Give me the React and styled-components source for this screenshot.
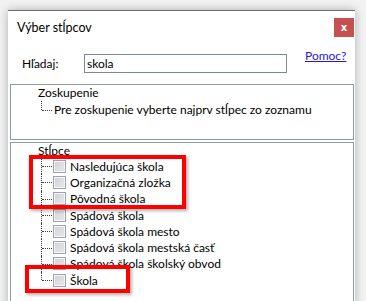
import React from "react";
import styled, {createGlobalStyle} from "styled-components";

const GlobalStyle = createGlobalStyle`
  html, body {
    margin: 0;
    padding: 0;
    height: 301px;
    overflow: hidden;
    background: #f2f2f2;
  }
  body {
    font-family: Lato, "Noto Sans", "Liberation Sans", sans-serif;
    font-size: 12px;
    color: #000;
  }
`;

const Window = styled.div`
  display: flex;
  flex-direction: column;
  box-sizing: border-box;
  width: 347px;
  height: 300px;
  margin: 10px 0 0 8px;
  background: #fff;
  border-top: 1px solid #6d6d6d;
  box-shadow: 0 0 9px rgba(0, 0, 0, 0.28);
`;

const TitleBar = styled.div`
  display: flex;
  align-items: flex-start;
  justify-content: space-between;
  height: 32px;
  padding: 7px 1px 0 9px;
  box-sizing: border-box;
`;

const Title = styled.div`
  line-height: 19px;
  font-size: 12.5px;
`;

const CloseButton = styled.div`
  display: flex;
  align-items: center;
  justify-content: center;
  width: 20px;
  height: 19px;
  background: #c75050;
  color: #fff;
  font-family: "DejaVu Sans", sans-serif;
  font-weight: bold;
  font-size: 10px;
  line-height: 1;
`;

const SearchRow = styled.div`
  display: flex;
  align-items: center;
  padding: 11px 0 0 14px;
`;

const Label = styled.label`
  width: 62px;
  line-height: 19px;
`;

const SearchInput = styled.input`
  box-sizing: border-box;
  width: 203px;
  height: 19px;
  margin: 0;
  padding: 0 2px;
  border: 1px solid #7b8896;
  font-family: inherit;
  font-size: 12px;
  color: #000;
  outline: none;
`;

const HelpLink = styled.a`
  align-self: flex-start;
  margin: -6px 0 0 18px;
  line-height: 16px;
  color: #2a16dc;
  text-decoration: underline;
  cursor: pointer;
`;

const Panel = styled.div`
  position: relative;
  box-sizing: border-box;
  width: 344px;
  margin: ${(p) => p.$gap}px 0 0 2px;
  border: 1px solid #8e99a6;
  ${(p) => (p.$fill ? "flex: 1;" : `height: ${p.$height}px;`)}
`;

const RootLabel = styled.div`
  height: ${(p) => p.$height}px;
  line-height: ${(p) => p.$height}px;
  padding-left: 27px;
`;

const Children = styled.div`
  padding-left: 30px;
`;

const Item = styled.div`
  display: flex;
  align-items: center;
  height: ${(p) => p.$height}px;
  white-space: nowrap;
`;

const Connector = styled.span`
  position: relative;
  align-self: stretch;
  width: 11px;
  flex: none;
  &::before {
    content: "";
    position: absolute;
    left: 0;
    top: 0;
    height: ${(p) => (p.$last ? "50%" : "100%")};
    border-left: 1px dotted #3c3c3c;
  }
  &::after {
    content: "";
    position: absolute;
    left: 1px;
    right: 0;
    top: 50%;
    border-top: 1px dotted #3c3c3c;
  }
`;

const Check = styled.span`
  box-sizing: border-box;
  flex: none;
  width: 13px;
  height: 13px;
  margin-left: 1px;
  border: 1px solid #9aa3b0;
  background: linear-gradient(135deg, #cfd2d6, #e8e9eb);
  box-shadow: inset 0 0 0 1px #f6f6f6;
`;

const ItemText = styled.span`
  margin-left: ${(p) => (p.$checkbox ? 4 : 2)}px;
`;

const Highlight = styled.div`
  position: absolute;
  box-sizing: border-box;
  left: ${(p) => p.$x}px;
  top: ${(p) => p.$y}px;
  width: ${(p) => p.$w}px;
  height: ${(p) => p.$h}px;
  border: 4px solid #ff0000;
  box-shadow: 2px 2px 3px rgba(0, 0, 0, 0.3);
  pointer-events: none;
`;

const columns = [
  "Nasledujúca škola",
  "Organizačná zložka",
  "Pôvodná škola",
  "Spádová škola",
  "Spádová škola mesto",
  "Spádová škola mestská časť",
  "Spádová škola školský obvod",
  "Škola",
];

export default function App() {
  return (
    <>
      <GlobalStyle />
      <Window>
        <TitleBar>
          <Title>Výber stĺpcov</Title>
          <CloseButton>x</CloseButton>
        </TitleBar>
        <SearchRow>
          <Label htmlFor="search">Hľadaj:</Label>
          <SearchInput id="search" defaultValue="skola" />
          <HelpLink>Pomoc?</HelpLink>
        </SearchRow>

        <Panel $gap={11} $height={56}>
          <RootLabel $height={16}>Zoskupenie</RootLabel>
          <Children>
            <Item $height={17}>
              <Connector $last />
              <ItemText>Pre zoskupenie vyberte najprv stĺpec zo zoznamu</ItemText>
            </Item>
          </Children>
        </Panel>

        <Panel $gap={2} $fill>
          <RootLabel $height={15}>Stĺpce</RootLabel>
          <Children>
            {columns.map((name, i) => (
              <Item key={name} $height={16.3}>
                <Connector $last={i === columns.length - 1} />
                <Check />
                <ItemText $checkbox>{name}</ItemText>
              </Item>
            ))}
          </Children>
          <Highlight $x={18} $y={12} $w={157} $h={54} />
          <Highlight $x={14} $y={122} $w={105} $h={28} />
        </Panel>
      </Window>
    </>
  );
}
